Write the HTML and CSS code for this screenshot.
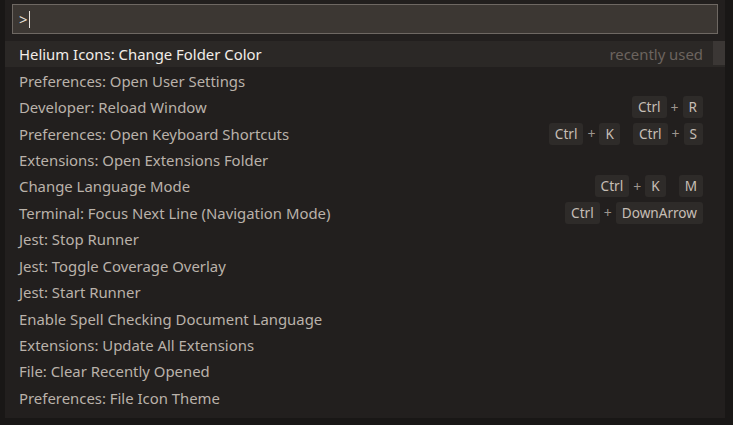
FILE: index.html
```html
<!DOCTYPE html>
<html>
<head>
<meta charset="utf-8">
<link rel="stylesheet" href="styles.css">
</head>
<body>
<div class="widget">
  <div class="input-wrap">
    <div class="input"><span class="prompt">&gt;</span><span class="caret"></span></div>
  </div>
  <div class="list">
    <div class="row selected"><span class="label">Helium Icons: Change Folder Color</span><span class="hint">recently used</span></div>
    <div class="row"><span class="label">Preferences: Open User Settings</span></div>
    <div class="row"><span class="label">Developer: Reload Window</span>
      <span class="keys"><span class="chord"><kbd>Ctrl</kbd><span class="plus">+</span><kbd>R</kbd></span></span></div>
    <div class="row"><span class="label">Preferences: Open Keyboard Shortcuts</span>
      <span class="keys"><span class="chord"><kbd>Ctrl</kbd><span class="plus">+</span><kbd>K</kbd></span><span class="chord"><kbd>Ctrl</kbd><span class="plus">+</span><kbd>S</kbd></span></span></div>
    <div class="row"><span class="label">Extensions: Open Extensions Folder</span></div>
    <div class="row"><span class="label">Change Language Mode</span>
      <span class="keys"><span class="chord"><kbd>Ctrl</kbd><span class="plus">+</span><kbd>K</kbd></span><span class="chord"><kbd>M</kbd></span></span></div>
    <div class="row"><span class="label">Terminal: Focus Next Line (Navigation Mode)</span>
      <span class="keys"><span class="chord"><kbd>Ctrl</kbd><span class="plus">+</span><kbd>DownArrow</kbd></span></span></div>
    <div class="row"><span class="label">Jest: Stop Runner</span></div>
    <div class="row"><span class="label">Jest: Toggle Coverage Overlay</span></div>
    <div class="row"><span class="label">Jest: Start Runner</span></div>
    <div class="row"><span class="label">Enable Spell Checking Document Language</span></div>
    <div class="row"><span class="label">Extensions: Update All Extensions</span></div>
    <div class="row"><span class="label">File: Clear Recently Opened</span></div>
    <div class="row"><span class="label">Preferences: File Icon Theme</span></div>
    <div class="scroll-thumb"></div>
  </div>
</div>
</body>
</html>
```

FILE: styles.css
```css
html, body {
  margin: 0;
  padding: 0;
  background: #191716;
  height: 100%;
}
body {
  font-family: "Noto Sans", "Open Sans", sans-serif;
  font-size: 14.9px;
  color: #bab2aa;
}
.widget {
  margin-left: 5px;
  width: 720px;
  height: 418px;
  background: #221f1e;
  box-sizing: border-box;
  padding-top: 4px;
}
.input-wrap {
  padding: 0 7px;
}
.input {
  height: 30px;
  box-sizing: border-box;
  border: 1px solid #6e6863;
  background: #3c3733;
  display: flex;
  align-items: center;
  padding-left: 6px;
  color: #e8e2dc;
  font-size: 14.9px;
}
.caret {
  display: inline-block;
  width: 1px;
  height: 17px;
  background: #e8e2dc;
  margin-left: 1px;
}
.list {
  position: relative;
  margin-top: 7px;
}
.row {
  height: 26.45px;
  display: flex;
  align-items: center;
  justify-content: space-between;
  padding: 0 22px 0 14px;
  white-space: nowrap;
}
.row.selected {
  background: #2b2826;
  color: #f2ede8;
}
.hint {
  color: #6c645f;
}
.keys {
  display: flex;
  align-items: center;
  gap: 13px;
}
.chord {
  display: flex;
  align-items: center;
}
kbd {
  font-family: inherit;
  font-size: 13.6px;
  background: #2e2b29;
  color: #c6beb6;
  border-radius: 3px;
  height: 22px;
  line-height: 22px;
  padding: 0 6px;
  box-sizing: border-box;
}
.plus {
  color: #9d958e;
  padding: 0 4px;
  font-size: 14px;
}
.scroll-thumb {
  position: absolute;
  top: 0;
  right: 0;
  width: 12px;
  height: 24px;
  background: #3b3735;
}
```
